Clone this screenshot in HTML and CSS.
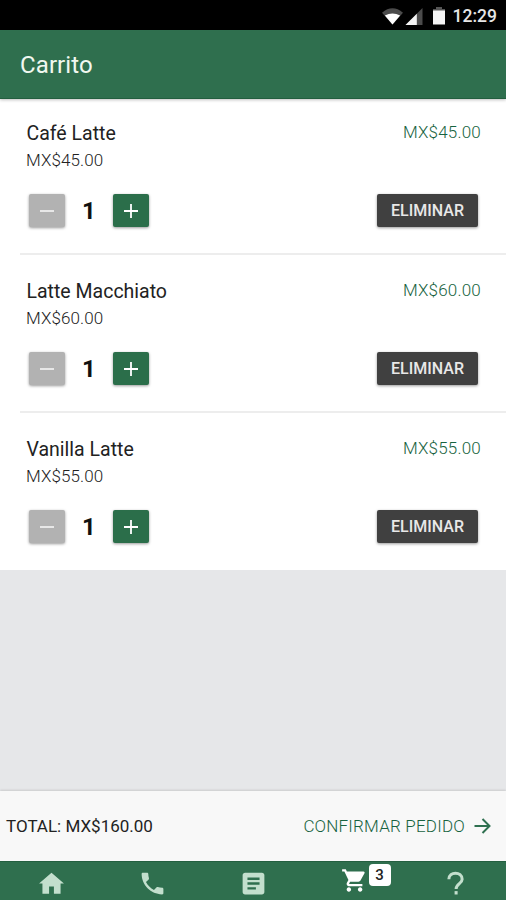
FILE: index.html
```html
<!DOCTYPE html>
<html lang="es">
<head>
<meta charset="utf-8">
<title>Carrito</title>
<link rel="stylesheet" href="styles.css">
</head>
<body>
<div class="app">
  <div class="status">
    <svg class="wifi" viewBox="0 0 22 18"><path d="M0 5.500Q11-3.500 22 5.500L11 18Z" fill="#4b4b4b"/><path d="M3 8.500Q11 4.500 19 8.500L11 18Z" fill="#fff"/></svg>
    <svg class="signal" viewBox="0 0 18 18"><path d="M18 0V18H0Z" fill="#4b4b4b"/><path d="M12 6V18H0Z" fill="#f4f4f4"/></svg>
    <svg class="battery" viewBox="0 0 12 18"><path d="M3 0H9V2H12V5H0V2H3Z" fill="#555"/><path d="M0 3.500H12V17.500H0Z" fill="#f4f4f4"/></svg>
    <span class="clock">12:29</span>
  </div>
  <header class="header"><h1>Carrito</h1></header>
  <main class="list">
    <section class="item">
      <div class="row"><h2>Café Latte</h2><span class="amount">MX$45.00</span></div>
      <p class="unit">MX$45.00</p>
      <div class="controls">
        <button class="step off"><svg viewBox="0 0 16 16"><path d="M1 8H15"/></svg></button>
        <span class="qty">1</span>
        <button class="step"><svg viewBox="0 0 16 16"><path d="M1 8H15M8 1V15"/></svg></button>
        <button class="remove">ELIMINAR</button>
      </div>
    </section>
    <section class="item">
      <div class="row"><h2>Latte Macchiato</h2><span class="amount">MX$60.00</span></div>
      <p class="unit">MX$60.00</p>
      <div class="controls">
        <button class="step off"><svg viewBox="0 0 16 16"><path d="M1 8H15"/></svg></button>
        <span class="qty">1</span>
        <button class="step"><svg viewBox="0 0 16 16"><path d="M1 8H15M8 1V15"/></svg></button>
        <button class="remove">ELIMINAR</button>
      </div>
    </section>
    <section class="item">
      <div class="row"><h2>Vanilla Latte</h2><span class="amount">MX$55.00</span></div>
      <p class="unit">MX$55.00</p>
      <div class="controls">
        <button class="step off"><svg viewBox="0 0 16 16"><path d="M1 8H15"/></svg></button>
        <span class="qty">1</span>
        <button class="step"><svg viewBox="0 0 16 16"><path d="M1 8H15M8 1V15"/></svg></button>
        <button class="remove">ELIMINAR</button>
      </div>
    </section>
  </main>
  <div class="total">
    <span class="sum">TOTAL: MX$160.00</span>
    <span class="confirm">CONFIRMAR PEDIDO</span>
    <svg class="arrow" viewBox="0 0 16 16"><path d="M0 8H14.500M8 1L15 8L8 15"/></svg>
  </div>
  <nav class="tabs">
    <span class="tab"><svg viewBox="0 0 24 24"><path d="M10 20.500v-6h4v6h5.500v-8.500h2.800L12 3 1.700 12h2.800v8.500z"/></svg></span>
    <span class="tab"><svg viewBox="0 0 24 24"><path d="M6.620 10.790c1.440 2.830 3.760 5.140 6.590 6.590l2.200-2.200c.27-.27.67-.36 1.020-.24 1.120.37 2.330.57 3.570.57.55 0 1 .45 1 1V20c0 .55-.45 1-1 1-9.390 0-17-7.610-17-17 0-.55.45-1 1-1h3.500c.55 0 1 .45 1 1 0 1.250.2 2.450.57 3.570.11.35.03.74-.25 1.020l-2.200 2.200z"/></svg></span>
    <span class="tab"><svg viewBox="0 0 24 24"><path d="M19 3H5c-1.100 0-2 .9-2 2v14c0 1.100.9 2 2 2h14c1.100 0 2-.9 2-2V5c0-1.100-.9-2-2-2zm-5 14H7v-2h7v2zm3-4H7v-2h10v2zm0-4H7V7h10v2z"/></svg></span>
    <span class="tab active"><svg viewBox="0 0 24 24"><path d="M7 18c-1.100 0-1.990.9-1.990 2S5.900 22 7 22s2-.9 2-2-.9-2-2-2zM1 2v2h2l3.600 7.590-1.350 2.450c-.16.28-.25.61-.25.96 0 1.100.9 2 2 2h12v-2H7.420c-.14 0-.25-.11-.25-.25l.03-.12.9-1.630h7.450c.75 0 1.410-.41 1.750-1.030l3.580-6.490A1 1 0 0 0 20 4H5.210l-.94-2H1zm16 16c-1.100 0-1.990.9-1.990 2s.89 2 1.990 2 2-.9 2-2-.9-2-2-2z"/></svg><b class="badge">3</b></span>
    <span class="tab"><svg class="help" viewBox="0 0 24 24"><path d="M6.500 8.500C6.500 1.800 17.500 1.800 17.500 8.500C17.500 12 12.500 12.200 12.500 16.500"/><path d="M12.500 18.300V21.100"/></svg></span>
  </nav>
</div>
</body>
</html>
```
FILE: styles.css
```css
* { box-sizing: border-box; }
body { margin: 0; font-family: Roboto, sans-serif; color: #222; }
h1, h2, p { margin: 0; font-weight: 400; }
svg { display: block; flex: none; }
.app { width: 506px; height: 900px; display: flex; flex-direction: column; background: #e6e7e9; overflow: hidden; }

.status { height: 30px; flex: none; background: #000; display: flex; align-items: center; justify-content: flex-end; padding: 2px 9px 0 0; }
.wifi { width: 21px; height: 18px; }
.signal { width: 18px; height: 17px; margin-left: 2px; }
.battery { width: 12px; height: 18px; margin-left: 10px; }
.clock { color: #e6e6e6; font-size: 17.500px; font-weight: 500; line-height: 24px; margin-left: 8px; }

.header { position: relative; z-index: 1; height: 69px; flex: none; background: #2f6f4e; display: flex; align-items: center; padding: 2px 0 0 20px; box-shadow: 0 1px 3px rgba(0,0,0,.25); border-bottom: 1px solid #235e3f; }
.header h1 { color: #f1f8f0; font-size: 24px; line-height: 30px; letter-spacing: .1px; }

.list { margin-top: -2px; flex: none; background: #fff; }
.item { height: 158px; margin-left: 20px; padding: 23px 25px 0 6px; border-bottom: 2px solid #ededed; }
.item:last-child { height: 157px; border-bottom: 0; }
.row { display: flex; justify-content: space-between; }
.row h2 { font-size: 19.500px; line-height: 27px; height: 26px; color: #222; padding-left: .5px; }
.amount { font-size: 17px; font-weight: 300; letter-spacing: .2px; line-height: 24px; color: #176340; }
.unit { font-size: 17px; font-weight: 300; letter-spacing: .1px; line-height: 24px; margin-top: 2px; color: #222; }
.controls { display: flex; align-items: center; margin-top: 22px; padding: 0 3px 0 3px; }
button { border: 0; padding: 0; font-family: inherit; height: 33px; border-radius: 2px; box-shadow: 0 1px 3px rgba(0,0,0,.4); }
.step { width: 36px; display: flex; align-items: center; justify-content: center; background: #2b6e4a; }
.step svg { width: 16px; height: 16px; fill: none; stroke: #fff; stroke-width: 1.800; }
.off { background: #b2b2b2; }
.off svg { stroke: #eee; }
.qty { width: 48px; text-align: center; font-size: 24px; line-height: 33px; height: 33px; padding-top: 1px; font-weight: 700; color: #111; }
.remove { width: 101px; margin-left: auto; background: #404040; color: #e8e8e8; font-size: 16px; font-weight: 500; }

.total { margin-top: auto; height: 70px; flex: none; background: #f8f8f8; display: flex; align-items: center; padding: 0 15px 0 6px; font-size: 17px; box-shadow: 0 -1px 2px rgba(0,0,0,.12); }
.sum { color: #222; }
.confirm { margin-left: auto; color: #176340; font-weight: 300; letter-spacing: .2px; }
.arrow { width: 17px; height: 16px; margin-left: 9px; fill: none; stroke: #2f7050; stroke-width: 2; }

.tabs { height: 39px; flex: none; background: #2f6f4e; border-top: 1px solid #245f40; display: grid; grid-template-columns: repeat(5, 1fr); }
.tab { position: relative; display: flex; justify-content: center; padding: 7px 0 0 1px; }
.tab svg { width: 29px; height: 29px; fill: #c3dfcd; }
.tab .help { fill: none; stroke: #c3dfcd; stroke-width: 2.500; }
.active { padding: 5px 0 0 1px; }
.active svg { width: 27px; height: 27px; fill: #fff; }
.badge { position: absolute; left: 65px; top: 2px; width: 22px; height: 22px; border-radius: 4px; background: #fff; color: #222; font-size: 15px; font-weight: 500; line-height: 23px; text-align: center; }
```
